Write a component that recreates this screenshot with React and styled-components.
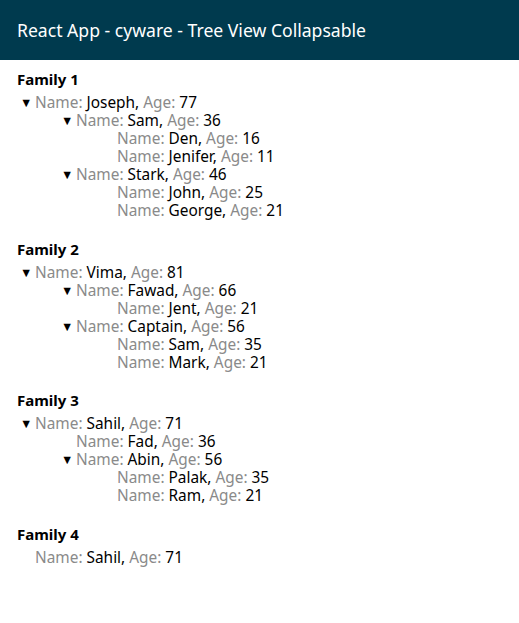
import React, { useState } from 'react'
import styled, { createGlobalStyle } from 'styled-components'

const GlobalStyle = createGlobalStyle`
  body {
    margin: 0;
    background: #ffffff;
    font-family: "Noto Sans", "Open Sans", sans-serif;
  }
`

const Header = styled.header`
  height: 60px;
  background-color: #003a4e;
  color: #ffffff;
  display: flex;
  align-items: center;
  padding: 0 17px;
  font-size: 17.6px;
`

const Main = styled.main`
  padding: 7px 17px;
`

const Family = styled.section`
  margin-bottom: 16.6px;
`

const FamilyTitle = styled.h4`
  margin: 0 0 3px;
  font-size: 15px;
  font-weight: bold;
  line-height: 24px;
  color: #000;
`

const List = styled.ul`
  list-style: none;
  margin: 0;
  padding: 0 0 0 ${p => (p.nested ? '41px' : '0')};
`

const Row = styled.div`
  display: flex;
  align-items: center;
  font-size: 15.4px;
  line-height: 18px;
  height: 18px;
  color: #000;
  white-space: nowrap;
  cursor: ${p => (p.clickable ? 'pointer' : 'default')};
`

const Toggle = styled.span`
  width: 18px;
  flex-shrink: 0;
  font-size: 12.5px;
  padding-left: 3px;
  box-sizing: border-box;
`

const Label = styled.span`
  color: #8a8a8a;
`

const data = [
  {
    title: 'Family 1',
    tree: {
      name: 'Joseph', age: 77, children: [
        { name: 'Sam', age: 36, children: [{ name: 'Den', age: 16 }, { name: 'Jenifer', age: 11 }] },
        { name: 'Stark', age: 46, children: [{ name: 'John', age: 25 }, { name: 'George', age: 21 }] },
      ],
    },
  },
  {
    title: 'Family 2',
    tree: {
      name: 'Vima', age: 81, children: [
        { name: 'Fawad', age: 66, children: [{ name: 'Jent', age: 21 }] },
        { name: 'Captain', age: 56, children: [{ name: 'Sam', age: 35 }, { name: 'Mark', age: 21 }] },
      ],
    },
  },
  {
    title: 'Family 3',
    tree: {
      name: 'Sahil', age: 71, children: [
        { name: 'Fad', age: 36 },
        { name: 'Abin', age: 56, children: [{ name: 'Palak', age: 35 }, { name: 'Ram', age: 21 }] },
      ],
    },
  },
  {
    title: 'Family 4',
    tree: { name: 'Sahil', age: 71 },
  },
]

const Node = ({ node }) => {
  const [open, setOpen] = useState(true)
  const hasKids = node.children && node.children.length > 0
  return (
    <li>
      <Row clickable={hasKids} onClick={() => hasKids && setOpen(!open)}>
        <Toggle>{hasKids ? (open ? '▼' : '▶') : ''}</Toggle>
        <span>
          <Label>Name: </Label>{node.name}, <Label>Age: </Label>{node.age}
        </span>
      </Row>
      {hasKids && open && (
        <List nested>
          {node.children.map((c, i) => <Node key={i} node={c} />)}
        </List>
      )}
    </li>
  )
}

const App = () => {
  return (
    <>
      <GlobalStyle />
      <Header>React App - cyware - Tree View Collapsable</Header>
      <Main>
        {data.map(f => (
          <Family key={f.title}>
            <FamilyTitle>{f.title}</FamilyTitle>
            <List>
              <Node node={f.tree} />
            </List>
          </Family>
        ))}
      </Main>
    </>
  )
}

export default App
